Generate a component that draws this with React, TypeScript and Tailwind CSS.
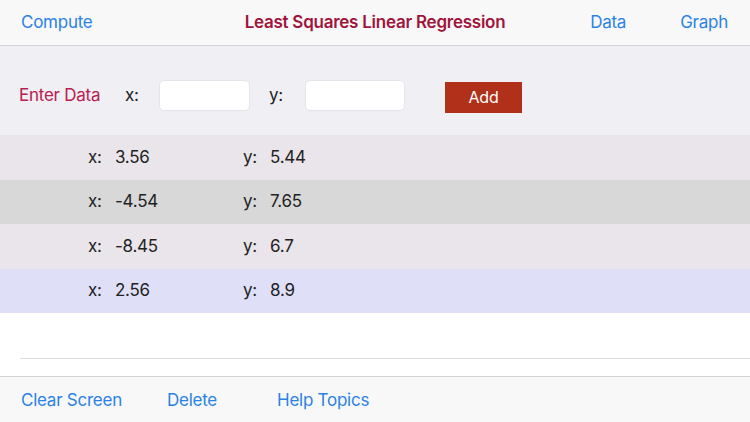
import { useState } from "react";

const rows = [
  { x: "3.56", y: "5.44", bg: "bg-[#e9e5ea]" },
  { x: "-4.54", y: "7.65", bg: "bg-[#d8d8d8]" },
  { x: "-8.45", y: "6.7", bg: "bg-[#e9e5ea]" },
  { x: "2.56", y: "8.9", bg: "bg-[#dfdff8]" },
];

export default function App() {
  const [xVal, setXVal] = useState("");
  const [yVal, setYVal] = useState("");

  return (
    <div className="w-[750px] h-[422px] flex flex-col bg-white font-['Inter','Liberation_Sans',sans-serif] text-[17px] tracking-[-0.25px] overflow-hidden">
      {/* top nav */}
      <div className="h-[46px] shrink-0 flex items-center pt-px bg-[#f8f8f8] border-b border-[#d4d4d8] relative">
        <span className="ml-[21px] text-[#2a82e4]">Compute</span>
        <span className="absolute left-0 right-0 text-center font-semibold text-[#a0143c] pointer-events-none">
          Least Squares Linear Regression
        </span>
        <span className="ml-auto text-[#2a82e4]">Data</span>
        <span className="ml-[54px] mr-[22px] text-[#2a82e4]">Graph</span>
      </div>

      {/* entry */}
      <div className="h-[89px] shrink-0 flex items-center pt-[10px] bg-[#efeff4]">
        <span className="ml-[19px] w-[106px] text-[#b8204f]">Enter Data</span>
        <span className="w-[34px] text-[#222]">x:</span>
        <input
          value={xVal}
          onChange={(e) => setXVal(e.target.value)}
          className="w-[91px] h-[31px] bg-white rounded-[5px] border border-[#e4e4ea] outline-none px-2"
        />
        <span className="ml-[19px] w-[36px] text-[#222]">y:</span>
        <input
          value={yVal}
          onChange={(e) => setYVal(e.target.value)}
          className="w-[100px] h-[31px] bg-white rounded-[5px] border border-[#e4e4ea] outline-none px-2"
        />
        <button className="ml-[40px] mt-[3px] w-[77px] h-[31px] bg-[#b0301a] text-white text-[16px]">
          Add
        </button>
      </div>

      {/* data rows */}
      {rows.map((r, i) => (
        <div key={i} className={`h-[44.5px] shrink-0 flex items-center text-[#222] ${r.bg}`}>
          <span className="ml-[88px] w-[27px]">x:</span>
          <span className="w-[128px]">{r.x}</span>
          <span className="w-[27px]">y:</span>
          <span>{r.y}</span>
        </div>
      ))}

      <div className="h-[45px] shrink-0 bg-white" />
      <div className="h-px shrink-0 ml-[20px] bg-[#dcdcdc]" />
      <div className="flex-1 bg-white" />

      {/* toolbar */}
      <div className="h-[46px] shrink-0 flex items-center pt-[2px] bg-[#f8f8f8] border-t border-[#d4d4d8] text-[#2a82e4]">
        <span className="ml-[21px] w-[146px]">Clear Screen</span>
        <span className="w-[110px]">Delete</span>
        <span>Help Topics</span>
      </div>
    </div>
  );
}
